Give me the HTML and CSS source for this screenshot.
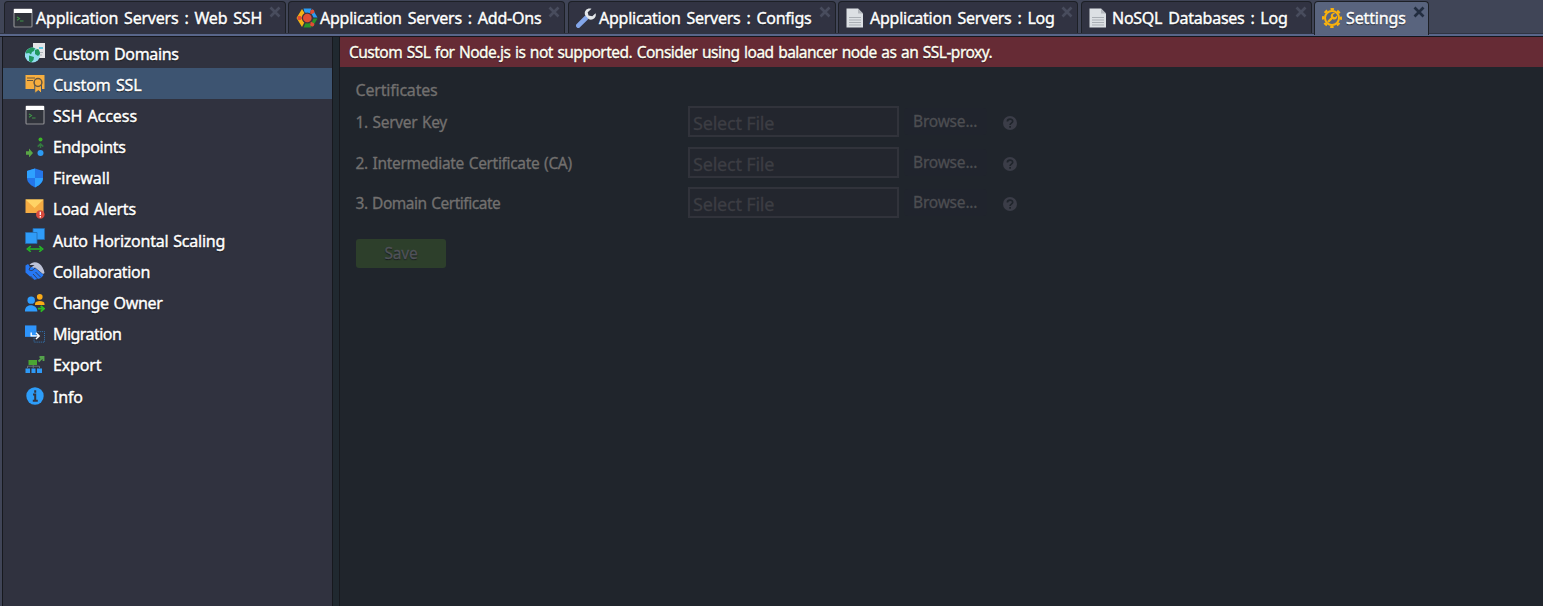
FILE: index.html
```html
<!DOCTYPE html>
<html lang="en">
<head>
<meta charset="utf-8">
<title>Settings</title>
<link rel="stylesheet" href="styles.css">
</head>
<body>
<svg class="defs" width="0" height="0">
  <symbol id="terminal" viewBox="0 0 20 20"><rect x="1" y="1" width="18" height="18" rx="1" fill="#30333b" stroke="#8b8c90" stroke-width="1.2"/><path d="M1 1h18v4H1z" fill="#fff"/><path d="M4 9l2.5 1.6L4 12.2M7 13h3.5" fill="none" stroke="#3f9648" stroke-width="1.1"/></symbol>
  <symbol id="doc" viewBox="0 0 18 20"><path d="M.5.5h11.5l5 5V19.5H.5z" fill="#dce0e4"/><path d="M12 .5v5h5z" fill="#b4b8be"/><path d="M3 9.5h12M3 12h12M3 14.5h12M3 17h12" stroke="#aaafb5" stroke-width="1"/></symbol>
  <symbol id="x" viewBox="0 0 12 12"><path d="M1.5 1.5l9 9M10.5 1.5l-9 9" stroke="currentColor" stroke-width="2.7"/></symbol>
  <symbol id="help" viewBox="0 0 14 14"><circle cx="7" cy="7" r="7" fill="#3b3d48"/><path d="M4.4 5.5c0-3.2 5.3-3.2 5.3-.2 0 1.8-2.6 1.8-2.6 3.6M7.1 10.1v1.7" fill="none" stroke="#1f242b" stroke-width="1.7"/></symbol>
</svg>
<div class="app">
  <nav class="tabs">
    <div class="tab t1"><svg class="ico"><use href="#terminal"/></svg><span>Application Servers : Web SSH</span><svg class="close"><use href="#x"/></svg></div>
    <div class="tab t2"><svg class="ico" viewBox="0 0 21 20"><path d="M7 .5h8l-1.500 4.500H9.500L8 4z" fill="#2b9cf2"/><path d="M16 1l5 8.500h-4L15 6z" fill="#2b9cf2"/><path d="M21 10.500L16 19l-1-4 2-4.500z" fill="#279329"/><path d="M15 19.500H7L9 15h4.500z" fill="#279329"/><path d="M5.500 1L0 10l5.500 9 2.500-5-2-4 2-5z" fill="#f4b315"/><path d="M2.500 10h5M13 7l3-3.500M13.500 13l2.500 3.500" stroke="#e14e34" stroke-width="1.500"/><circle cx="10.800" cy="10" r="4.900" fill="#e14e34" stroke="#44343c" stroke-width="1.200"/><circle cx="3" cy="10" r="2.200" fill="#e14e34"/><circle cx="15.800" cy="3.700" r="2.100" fill="#e14e34"/><circle cx="15.700" cy="16.500" r="2.100" fill="#e14e34"/></svg><span>Application Servers : Add-Ons</span><svg class="close"><use href="#x"/></svg></div>
    <div class="tab t3"><svg class="ico" viewBox="0 0 20 20"><path d="M10 10L2.300 17.700" stroke="#83a6ea" stroke-width="4.600" stroke-linecap="round"/><path d="M15.500.800c-5.200-1.500-8 3.200-6.200 6.800l3.500 3.700c4 1.700 8-1.800 6.800-6l-3.300 3-3.800-.7-.8-3.400z" fill="#e4e7ea"/></svg><span>Application Servers : Configs</span><svg class="close"><use href="#x"/></svg></div>
    <div class="tab t4"><svg class="ico"><use href="#doc"/></svg><span>Application Servers : Log</span><svg class="close"><use href="#x"/></svg></div>
    <div class="tab t5"><svg class="ico"><use href="#doc"/></svg><span>NoSQL Databases : Log</span><svg class="close"><use href="#x"/></svg></div>
    <div class="tab t6 active"><svg class="ico" viewBox="0 0 20 20"><g fill="none" stroke="#fab20c"><circle cx="10" cy="10" r="7" stroke-width="2"/><circle cx="10" cy="10" r="8.900" stroke-width="2.200" stroke-dasharray="3.500 3.490" stroke-dashoffset="1.750"/></g><path d="M6 14l4.500-4.500" stroke="#fab20c" stroke-width="2.400"/><path d="M13 5.200c-3-.8-4.900 1.800-4 4l2.200 2.200c2.300.8 4.600-1.200 3.800-3.900l-2 1.800-1.700-.5-.4-1.700z" fill="#fab20c"/></svg><span>Settings</span><svg class="close"><use href="#x"/></svg></div>
  </nav>
  <div class="body">
    <aside class="side">
      <div class="row r1"><svg class="ico" viewBox="0 0 20 20"><path d="M8 0h12v15H8z" fill="#e5e5e8"/><path d="M14 4h4v2h-4z" fill="#5ec8e2"/><path d="M15 9.500h3M15 12h2" stroke="#aeb4b9"/><circle cx="7.500" cy="12" r="7.600" fill="#92ddef"/><path d="M1 8.500c3-5 7-4.500 9-3.300L9 8l-2 1-1 2.500-2-1.500-3 .5zM10 7l3-1c1 1 2 2.500 2 5l-2 2-3-2zM4 12.500l5 1.500-.5 3-2.500 2.500-2-1.500z" fill="#219760"/></svg><span>Custom Domains</span></div>
      <div class="row r2 sel"><svg class="ico" viewBox="0 0 20 20"><path d="M.5 1h19v14H.5z" fill="#f7ae3f"/><path d="M2 4h8M2 6.500h6" stroke="#665640" stroke-width="1.200"/><path d="M9.800 11h6.700v8.500l-3.200-3-3.500 3z" fill="#f7ae3f" stroke="#3d5471"/><circle cx="13" cy="8.500" r="3.900" fill="#f7ae3f" stroke="#665640" stroke-width="1.500"/><path d="M10.700 13.500h5v4l-2.500-2-2.500 2z" fill="#f7ae3f"/></svg><span>Custom SSL</span></div>
      <div class="row r3"><svg class="ico"><use href="#terminal"/></svg><span>SSH Access</span></div>
      <div class="row r4"><svg class="ico" viewBox="0 0 20 20"><circle cx="15.500" cy="2.500" r="2" fill="#3db427"/><circle cx="15.500" cy="16" r="3" fill="#2d9bf3"/><path d="M1 14.300h3v-2.800l4 4.500-4 4.500v-2.800H1z" fill="#5aa646"/><path d="M15.500 11V7M12.700 9.600l2.800-2.800 2.800 2.800" fill="none" stroke="#347941" stroke-width="1.500"/></svg><span>Endpoints</span></div>
      <div class="row r5"><svg class="ico" viewBox="0 0 20 20"><path d="M10 .5L18 3v7c0 5-5 8-8 9.500C7 18 2 15 2 10V3z" fill="#2476e9"/><path d="M10 .5V10H2V3zM10 10h8c0 5-5 8-8 9.500z" fill="#2ea1ff"/></svg><span>Firewall</span></div>
      <div class="row r6"><svg class="ico" viewBox="0 0 20 20"><path d="M.5.5h18V14H.5z" fill="#f5ac43"/><path d="M.5.500h18L9.500 9z" fill="#ffd365"/><circle cx="15.300" cy="15.500" r="4.300" fill="#d74a3e"/><path d="M15.300 12.700v3.400M15.300 17v1.500" stroke="#fff" stroke-width="1.300"/></svg><span>Load Alerts</span></div>
      <div class="row r7"><svg class="ico" viewBox="0 0 20 24"><g fill="#2f9cf8" stroke="#236cb0" stroke-width=".8"><path d="M8 .5h11.500v11H8z"/><path d="M.5 4.500h11.500v11H.5z"/></g><path d="M4 21h12M5.800 18.200L2.300 21l3.500 2.800M14.200 18.200l3.500 2.800-3.500 2.800" fill="none" stroke="#26b727" stroke-width="1.500"/></svg><span>Auto Horizontal Scaling</span></div>
      <div class="row r8"><svg class="ico" viewBox="0 0 20 20"><path d="M4.500 4C7 .5 11 .5 14 2.500c3 2 5 6 5.500 9.500L18 13 10 6.500 6.500 8.500 5.500 7l4-3z" fill="#bec3d8"/><path d="M.5 4.500L3 3l2 2.500-.5 3c1.500 1.500 3.500.5 5-1.500L18.500 14l-1 1.500z" fill="#2678f4"/><path d="M.5 4.500v7L9 19l1.500-.5L16.500 17l2-3L10 7z" fill="#2678f4"/><path d="M10.500 11l5.500 5.500M8 13l5 5.500M5.500 15l4 4.500" stroke="#30323f" stroke-width=".8"/><path d="M4.500 4.500l1 1.500-1.500 2.500c2 2 4 1 6-1.500" fill="none" stroke="#30323f" stroke-width=".9"/><path d="M0 13l8 7H0zM13 20l7-7v7z" fill="#30323f"/></svg><span>Collaboration</span></div>
      <div class="row r9"><svg class="ico" viewBox="0 0 21 20"><circle cx="15.500" cy="3.500" r="3" fill="#faab17"/><path d="M10.500 11c0-4 10-4 10 0v1h-10z" fill="#faab17"/><circle cx="6.500" cy="7" r="3.900" fill="#2e9dff"/><path d="M0 19c-1-9 13-9 13 0z" fill="#2e9dff"/><path d="M13.500 16h5M16.500 13l3.500 3-3.500 3" fill="none" stroke="#2dbd24" stroke-width="1.900"/></svg><span>Change Owner</span></div>
      <div class="row r10"><svg class="ico" viewBox="0 0 21 18"><path d="M0 0h12v12H0z" fill="#2e94fb"/><path d="M10 6.500h10.500v11h-11V12" fill="none" stroke="#347fc3" stroke-dasharray="1 1"/><path d="M6.500 7.500V11H14M11.500 7.700l3.400 3.300-3.400 3.300" fill="none" stroke="#fff" stroke-width="1.500"/></svg><span>Migration</span></div>
      <div class="row r11"><svg class="ico" viewBox="0 0 20 18"><path d="M3.500 4h8.500v5H3.500z" fill="#4ba633"/><path d="M2.500 12v-1.800h12V12M8.200 9v3" fill="none" stroke="#66737b"/><path d="M.5 12.500h4.500v4.500H.500zM6.500 12.500h4v4.500h-4zM12 12.500h5v4.500h-5z" fill="#2e99f6"/><path d="M13.500 5.500L18 1M14.500 1h4v4" fill="none" stroke="#55a34c" stroke-width="1.900"/></svg><span>Export</span></div>
      <div class="row r12"><svg class="ico" viewBox="0 0 20 20"><circle cx="10" cy="10" r="8.700" fill="#2d9df9"/><path d="M10.200 4.300v2.500M8 8.500h2.200V14.500M7.800 14.700h5" fill="none" stroke="#333541" stroke-width="2"/></svg><span>Info</span></div>
    </aside>
    <main class="main">
      <div class="alert"><span>Custom SSL for Node.js is not supported. Consider using load balancer node as an SSL-proxy.</span></div>
      <form class="form">
        <h1><span>Certificates</span></h1>
        <div class="field f1"><label>1. Server Key</label><div class="input">Select File</div><div class="browse">Browse...</div><svg class="help"><use href="#help"/></svg></div>
        <div class="field f2"><label>2. Intermediate Certificate (CA)</label><div class="input">Select File</div><div class="browse">Browse...</div><svg class="help"><use href="#help"/></svg></div>
        <div class="field f3"><label>3. Domain Certificate</label><div class="input">Select File</div><div class="browse">Browse...</div><svg class="help"><use href="#help"/></svg></div>
        <div class="save">Save</div>
      </form>
    </main>
  </div>
</div>
</body>
</html>
```
FILE: styles.css
```css
* { box-sizing: border-box; }
body { margin: 0; background: #20252c; font: 16px/20px "Noto Sans", sans-serif; color: #fff; overflow: hidden; }
.defs { position: absolute; }
.app { height: 606px; display: flex; flex-direction: column; background: #404557; }
svg { flex: none; display: block; }
span, label { white-space: nowrap; }
.tabs { height: 37px; padding: 1px 0 0 4px; display: flex; border-bottom: 1px solid #15171d; background: linear-gradient(#404557 33px, #303442 33px, #303442 34px, #59668a 34px); }
.tab { height: 32px; display: flex; background: #313342; border: 1px solid #1d2026; border-bottom: 0; border-radius: 4px 4px 0 0; padding-left: 8px; letter-spacing: -.25px; word-spacing: 2px; text-shadow: 0 1px 1px #15161c; -webkit-text-stroke: .4px #fff; }
.tab .ico { width: 20px; height: 20px; margin-top: 6px; }
.tab span { margin: 6px 0 0 3px; flex: 1; }
.close { width: 12px; height: 12px; margin: 4px 4px 0 0; color: #484c5d; }
.t1 { width: 282px; margin-right: 2px; letter-spacing: -.2px; }
.t2 { width: 277px; margin-right: 3px; padding-left: 7px; letter-spacing: -.23px; }
.t2 .ico { width: 22px; }
.t2 span { margin-left: 2px; }
.t3 { width: 268px; margin-right: 2px; padding-left: 7px; }
.t3 span { margin-left: 3px; }
.t4 { width: 240px; margin-right: 3px; padding-left: 7px; }
.t4 .ico, .t5 .ico { width: 18px; }
.t4 span { margin-left: 6px; }
.t5 { width: 231px; margin-right: 2px; padding-left: 7px; }
.t5 span { margin-left: 5px; }
.t6 { width: 115px; padding-left: 7px; letter-spacing: -.15px; }
.t6 span { margin-left: 4px; }
.active { height: 34px; background: #59647e; }
.active .close { color: #222d40; margin-right: 3px; }
.body { flex: 1; display: flex; padding-left: 2px; background: linear-gradient(90deg, #404557 2px, #202930 2px); }
.side { width: 331px; border: solid #17191e; border-width: 0 1px; background: #30323f; }
.row { height: 31.2px; padding: 6px 0 0 22px; display: flex; gap: 8px; letter-spacing: -.33px; word-spacing: 1px; text-shadow: 0 1px 1px #111; -webkit-text-stroke: .4px #fff; }
.row span { margin-top: .5px; }
.row .ico { width: 20px; height: 20px; }
.sel { background: #3d5471; }
.r2, .r3, .r5 { letter-spacing: -.05px; }
.r6, .r7 { letter-spacing: -.24px; }
.r10 { letter-spacing: -.55px; }
.r11, .r12 { letter-spacing: -.15px; }
.r7 .ico { height: 24px; margin-top: -2px; }
.main { flex: 1; margin-left: 6px; border-left: 1px solid #17191e; background: #20252c; }
.alert { height: 30px; padding: 5px 0 0 9px; background: #662b35; font-size: 15.5px; letter-spacing: -.51px; word-spacing: 1px; text-shadow: 0 1px 1px #1c1015; color: #fffef1; -webkit-text-stroke: .35px #fffef1; }
.form { padding: 12px 0 0 15px; color: #72706f; -webkit-text-stroke: .3px; }
h1 { margin: 0; height: 27px; padding: 1px 0 0 .5px; font-size: 16px; line-height: 21px; font-weight: 400; letter-spacing: -.2px; }
.field { height: 40.5px; display: flex; align-items: flex-start; }
.field label { width: 333px; padding: 6px 0 0 .5px; font-size: 15.5px; letter-spacing: -.33px; word-spacing: 1px; }
.f3 label { letter-spacing: -.48px; }
.input { width: 211px; height: 31px; border: 2px solid #31333b; background: #23262e; padding: 4px 0 0 3px; color: #3c3d43; font-size: 18px; line-height: 22px; letter-spacing: -.2px; }
.browse { width: 83px; height: 27px; margin: 2px 0 0 5px; padding: 3px 0 0 9px; background: #20242d; border-radius: 4px; color: #4d4e52; font-size: 15.5px; letter-spacing: -.2px; }
.help { width: 14px; height: 14px; margin: 10px 0 0 16px; }
.save { width: 90px; height: 29px; margin: 11px 0 0 1px; border-radius: 3px; background: #2d3f2b; color: #505259; text-align: center; line-height: 28px; font-size: 15.5px; letter-spacing: -.2px; text-shadow: 0 1px 1px #16191c; }
```
